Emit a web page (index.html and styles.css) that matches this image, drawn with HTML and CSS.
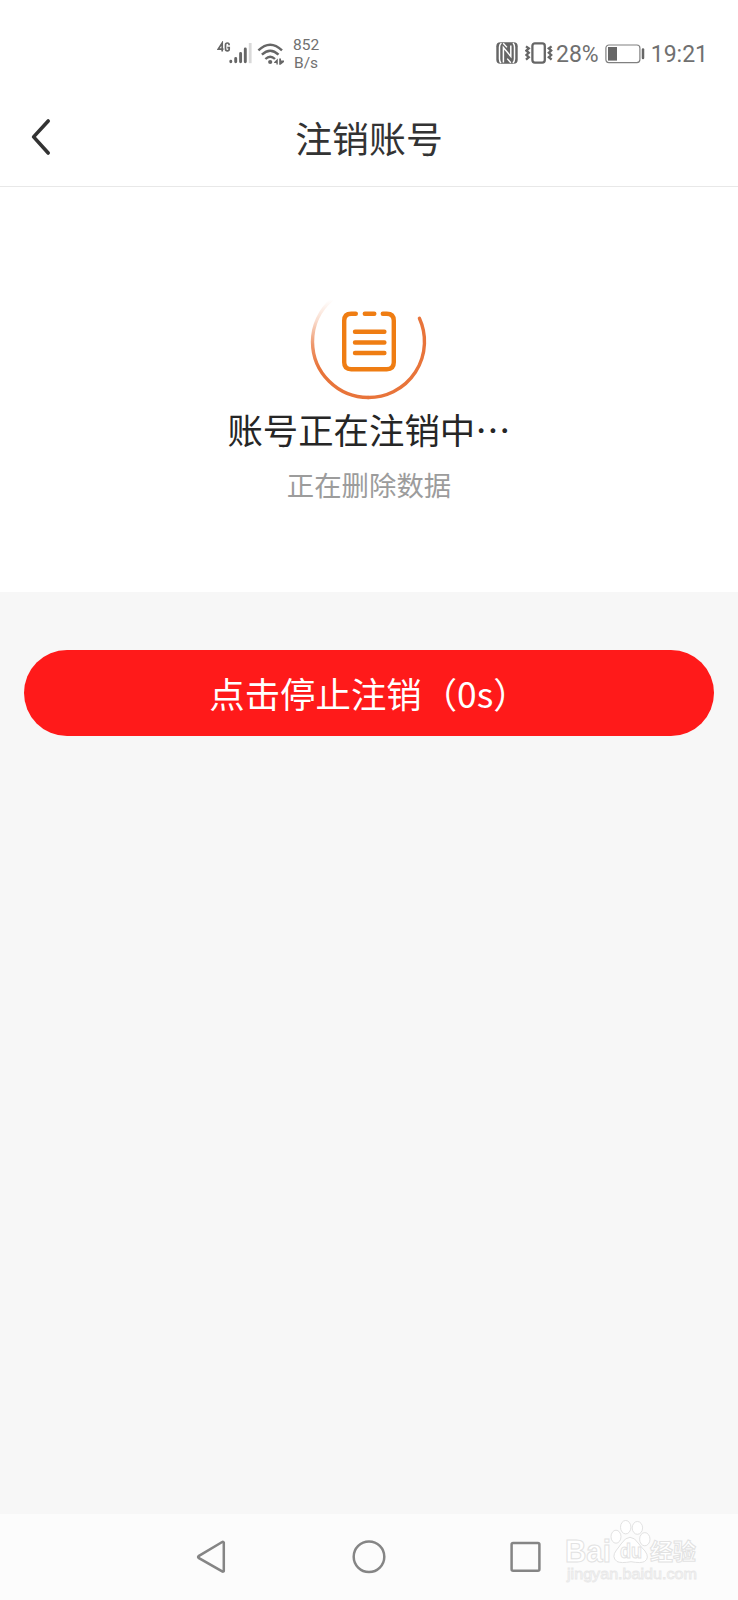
FILE: index.html
```html
<!DOCTYPE html>
<html lang="zh-CN">
<head>
<meta charset="utf-8">
<title>注销账号</title>
<link rel="stylesheet" href="styles.css">
</head>
<body>
<div class="screen">
  <div class="status-bar">
    <div class="status-left">
      <svg class="cell" width="36" height="26" viewBox="0 0 36 26">
        <g fill="none" stroke="#666" stroke-width="1.7">
          <path d="M5.2 10.6V2L1.2 8.1H6.5"/>
          <path d="M12.1 4.2V3.8Q12.1 2 10.4 2Q8.5 2 8.5 4V8Q8.5 9.9 10.4 9.9Q12.2 9.9 12.2 8V6.6H10.3"/>
        </g>
        <g stroke-width="2.9" stroke-linecap="round" stroke="#666">
          <path d="M13.8 20.2V20.8M18.7 17.4V20.8M23.6 12.5V20.8M28.3 8V20.8"/>
        </g>
        <path d="M33.2 2V22.2" stroke="#d9d9d9" stroke-width="2.8"/>
      </svg>
      <svg class="wifi" width="28" height="26" viewBox="0 0 28 26">
        <g fill="none" stroke="#666" stroke-width="2.4">
          <path d="M1.4 8.3Q13.2 -3 25 8.3"/>
          <path d="M4.9 12.7Q13.2 4.8 21.5 12.7"/>
          <path d="M8.4 17Q13.2 12.4 18 17"/>
        </g>
        <circle cx="13.2" cy="20" r="2.1" fill="#666"/>
        <path d="M17.1 20.2L20.8 16.5V22.5H19.4V21H17.1ZM22.2 16.5V22.7H23.6L27 20V18.6H24V16.5Z" fill="#666"/>
      </svg>
      <div class="speed"><span>852</span><span>B/s</span></div>
    </div>
    <div class="status-right">
      <svg class="nfc" width="22" height="22" viewBox="0 0 22 22">
        <rect x=".3" y=".3" width="21.4" height="21.4" rx="4" fill="#666"/>
        <g fill="none" stroke="#fff" stroke-width="1.5">
          <path d="M5.4 1Q3.5 2.4 3.5 5V17Q3.5 19.5 5 21"/>
          <path d="M7.4 20.6V5.6L14.8 14.4V3.6"/>
          <path d="M17 1Q18.5 2.4 18.5 5V17Q18.5 19.6 16.8 20.8"/>
        </g>
        <path d="M7.2 1.2L11 5.4M11.2 16.6L14.8 20.8" stroke="#fff" stroke-width="1.4"/>
      </svg>
      <svg class="vibrate" width="28" height="22" viewBox="0 0 28 22">
        <g fill="none" stroke="#666">
          <rect x="7.4" y="1.4" width="12.4" height="19.2" rx="2.5" stroke-width="2.3"/>
          <path d="M1 4.4L3.8 6.4L1.4 8.6L3.8 10.8L1.4 13L3.8 15.2L1 17.6" stroke-width="2.3"/>
          <path d="M26.6 4.4L23.8 6.4L26.2 8.6L23.8 10.8L26.2 13L23.8 15.2L26.6 17.6" stroke-width="2.3"/>
        </g>
      </svg>
      <span class="percent">28%</span>
      <svg class="battery" width="40" height="20" viewBox="0 0 40 20">
        <rect x=".9" y="1" width="34" height="17.6" rx="3" fill="none" stroke="#808080" stroke-width="1.2"/>
        <rect x="3" y="3" width="9" height="13.6" fill="#666"/>
        <path d="M38 5.6V14" stroke="#666" stroke-width="2.5" stroke-linecap="round"/>
      </svg>
      <span class="clock">19:21</span>
    </div>
  </div>

  <header class="header">
    <svg class="back" width="22" height="40" viewBox="0 0 22 40">
      <path d="M18.2 3L3.6 18.9L18.2 35" fill="none" stroke="#333" stroke-width="3.6" stroke-linecap="round" stroke-linejoin="round"/>
    </svg>
    <h1 class="title">注销账号</h1>
  </header>

  <section class="progress">
    <svg class="spinner" width="122" height="106" viewBox="0 0 122 106">
      <defs>
        <linearGradient id="arc" gradientUnits="userSpaceOnUse" x1="15" y1="4" x2="18" y2="72">
          <stop offset="0" stop-color="#e8743a" stop-opacity="0"/>
          <stop offset=".3" stop-color="#e8743a" stop-opacity=".25"/>
          <stop offset=".65" stop-color="#e8743a" stop-opacity=".75"/>
          <stop offset="1" stop-color="#e8743a"/>
        </linearGradient>
      </defs>
      <path d="M24 3.5A56 56 0 0 0 4.5 46A56 56 0 0 0 60.6 101.5" fill="none" stroke="url(#arc)" stroke-width="3.4"/>
      <path d="M60 101.5A56 56 0 0 0 111.4 22.2" fill="none" stroke="#e8743a" stroke-width="3.4" stroke-linecap="round"/>
      <g fill="none" stroke="#ef7d13" stroke-width="4.4" stroke-linecap="round" stroke-linejoin="round">
        <path d="M47.8 17.7H43.2Q36.2 17.7 36.2 24.7V66.2Q36.2 73.2 43.2 73.2H78.8Q85.8 73.2 85.8 66.2V24.7Q85.8 17.7 78.8 17.7H74.8M56.8 17.7H66.3"/>
        <path d="M47 35.8H76.4M47 46.5H76.4M47 57H76.4"/>
      </g>
    </svg>
    <h2 class="progress-title">账号正在注销中<span>⋯</span></h2>
    <p class="progress-note">正在删除数据</p>
  </section>

  <main class="content">
    <button class="stop">点击停止注销（0s）</button>
  </main>

  <nav class="nav">
    <svg width="32" height="36" viewBox="0 0 32 36">
      <path d="M27.8 3.6V32Q27.2 33 26.2 32.4L2.6 18.9Q1.6 18 2.6 17.1L26.2 3Q27.2 2.4 27.8 3.6Z" fill="none" stroke="#858585" stroke-width="2.5"/>
    </svg>
    <svg width="36" height="36" viewBox="0 0 36 36">
      <circle cx="18" cy="17.8" r="15.3" fill="none" stroke="#858585" stroke-width="2.5"/>
    </svg>
    <svg width="34" height="36" viewBox="0 0 34 36">
      <rect x="2.6" y="4" width="27.8" height="27.8" rx="1.5" fill="none" stroke="#858585" stroke-width="2.5"/>
    </svg>
    <div class="watermark">
      <svg width="136" height="66" viewBox="0 0 136 66">
        <g fill="#fff" stroke="#e2e2e2" stroke-width="1">
          <text class="brand" x="0" y="41.5" font-size="31" textLength="46" lengthAdjust="spacingAndGlyphs">Bai</text>
          <text class="cjk" x="85" y="40" font-size="23" textLength="46" lengthAdjust="spacingAndGlyphs">经验</text>
          <ellipse cx="51" cy="16.7" rx="5" ry="6.5"/>
          <ellipse cx="60.7" cy="7.2" rx="5.2" ry="6.7"/>
          <ellipse cx="72.4" cy="7.9" rx="5.2" ry="6.4"/>
          <ellipse cx="79.8" cy="19.2" rx="5.2" ry="6.6"/>
          <path d="M56 24Q65 10.5 74 24Q76 27 80 31Q85 38 79.5 41.5Q76 43.5 66 41.7Q56 43.5 52 41.5Q46 37 51.5 30Q54 27 56 24Z"/>
          <text class="brand" x="55" y="38" font-size="21" textLength="22" lengthAdjust="spacingAndGlyphs">du</text>
          <text class="domain" x="2" y="58.5" font-size="14" textLength="130" lengthAdjust="spacingAndGlyphs">jingyan.baidu.com</text>
        </g>
      </svg>
    </div>
  </nav>
</div>
</body>
</html>
```
FILE: styles.css
```css
* {
  box-sizing: border-box;
}

body {
  margin: 0;
  background: #f7f7f7;
  font-family: "Noto Sans CJK SC", sans-serif;
}

.screen {
  display: flex;
  flex-direction: column;
  width: 738px;
  height: 1600px;
  overflow: hidden;
}

.screen svg {
  display: block;
  flex: none;
}

.status-bar {
  display: flex;
  justify-content: space-between;
  height: 90px;
  padding: 36px 30px 0 217px;
  background: #fff;
  color: #707070;
  font-family: Roboto, sans-serif;
}

.status-left,
.status-right {
  display: flex;
  align-items: flex-start;
}

.cell {
  margin-top: 5px;
}

.wifi {
  margin: 6px 0 0 4px;
}

.speed {
  display: flex;
  flex-direction: column;
  align-items: center;
  margin-left: 8px;
  font-size: 15.5px;
  line-height: 18px;
}

.nfc {
  margin: 6px 7px 0 0;
}

.vibrate {
  margin-top: 6px;
}

.percent,
.clock {
  font-size: 23px;
  line-height: 38px;
}

.percent {
  margin-left: 3px;
}

.battery {
  margin: 8px 6px 0;
}

.header {
  display: grid;
  grid-template-columns: 1fr auto 1fr;
  height: 97px;
  padding-left: 30px;
  padding-right: 30px;
  border-bottom: 1px solid #e8e8e8;
  background: #fff;
}

.back {
  margin-top: 28px;
}

.title {
  margin: 20px 0 0;
  color: #333;
  font-size: 36.9px;
  font-weight: 400;
  line-height: 54px;
}

.progress {
  display: flex;
  flex-direction: column;
  align-items: center;
  height: 405px;
  padding-top: 109px;
  background: #fff;
}

.progress-title {
  margin: 0;
  color: #262626;
  font-size: 35.4px;
  font-weight: 400;
  line-height: 54px;
}

.progress-note {
  margin: 8px 0 0;
  color: #9c9c9c;
  font-size: 27.4px;
  line-height: 40px;
}

.content {
  flex: 1;
  padding: 58px 24px 0;
}

.stop {
  display: block;
  width: 100%;
  height: 86px;
  padding: 0;
  border: 0;
  border-radius: 43px;
  background: #ff1a1a;
  color: #fff;
  font-family: "Noto Sans CJK SC", sans-serif;
  font-size: 35.4px;
  line-height: 84px;
}

.nav {
  display: flex;
  height: 86px;
  padding: 25px 0 0 196px;
  background: #fcfcfc;
}

.nav > svg:nth-child(2) {
  margin-left: 123px;
}

.nav > svg:nth-child(3) {
  margin-left: 122px;
}

.watermark {
  margin: -19px 0 0 22px;
}

.brand {
  font-family: "Liberation Sans", sans-serif;
  font-weight: 700;
}

.cjk {
  font-family: "Noto Sans CJK SC", sans-serif;
  font-weight: 700;
}

.domain {
  fill: #fcfcfc;
  stroke: #e8e8e8;
  stroke-width: 0.8px;
  font-family: "Liberation Sans", sans-serif;
}
```
